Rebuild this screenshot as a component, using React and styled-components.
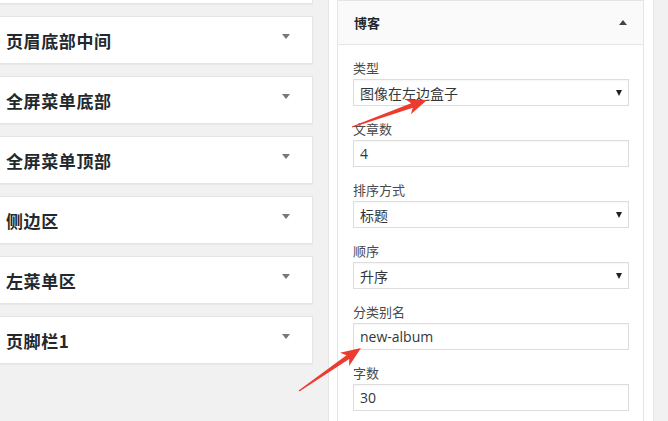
import React from "react";
import styled, { createGlobalStyle } from "styled-components";

const Global = createGlobalStyle`
  html, body { margin: 0; padding: 0; background: #f1f1f1; overflow: hidden; }
  #root { width: 668px; height: 421px; overflow: hidden; }
  * { box-sizing: border-box; }
`;

const Page = styled.div`
  position: relative;
  display: flex;
  align-items: flex-start;
  width: 668px;
  height: 421px;
  overflow: hidden;
  background: #f1f1f1;
  font-family: "Open Sans", "Noto Sans CJK SC", sans-serif;
`;

const SidebarList = styled.div`
  display: flex;
  flex-direction: column;
  gap: 12px;
  width: 313px;
  margin-top: -44px;
  flex-shrink: 0;
`;

const SidebarCard = styled.div`
  height: 48px;
  display: flex;
  align-items: center;
  justify-content: space-between;
  padding: 0 22px 0 6px;
  background: #fff;
  border: 1px solid #e5e5e5;
  border-left: none;
  box-shadow: 0 1px 1px rgba(0, 0, 0, 0.04);
`;

const CardTitle = styled.span`
  font-family: "Noto Sans CJK SC", sans-serif;
  font-weight: 700;
  font-size: 17px;
  letter-spacing: 0.6px;
  color: #23282d;
`;

const Caret = styled.span`
  display: inline-block;
  width: 0;
  height: 0;
  flex-shrink: 0;
  border-left: ${(p) => p.$half}px solid transparent;
  border-right: ${(p) => p.$half}px solid transparent;
  ${(p) =>
    p.$up
      ? `border-bottom: ${p.$h}px solid ${p.$color};`
      : `border-top: ${p.$h}px solid ${p.$color};`}
  margin-bottom: ${(p) => p.$lift || 0}px;
`;

const RightPanel = styled.div`
  margin-left: 15px;
  width: 326px;
  height: 421px;
  flex-shrink: 0;
  background: #fff;
  border-left: 1px solid #e5e5e5;
  border-right: 1px solid #e5e5e5;
  padding: 0 9px 0 8px;
`;

const Widget = styled.div`
  border: 1px solid #e5e5e5;
  border-bottom: none;
  background: #fff;
  height: 100%;
`;

const WidgetHeader = styled.div`
  height: 44px;
  display: flex;
  align-items: center;
  justify-content: space-between;
  padding: 0 16px 0 16px;
  background: #fafafa;
  border-bottom: 1px solid #e5e5e5;
`;

const WidgetTitle = styled.span`
  font-family: "Noto Sans CJK SC", sans-serif;
  font-weight: 700;
  font-size: 13px;
  color: #23282d;
`;

const WidgetBody = styled.div`
  padding: 14px 14px 0 15px;
  display: flex;
  flex-direction: column;
`;

const Field = styled.div`
  display: flex;
  flex-direction: column;
  margin-bottom: 14px;
`;

const Label = styled.label`
  font-family: "Noto Sans CJK SC", sans-serif;
  font-size: 13px;
  line-height: 18px;
  color: #4a4a4a;
  margin-bottom: 2px;
`;

const Control = styled.div`
  height: 27px;
  display: flex;
  align-items: center;
  justify-content: space-between;
  padding: 0 6px 0 6px;
  border: 1px solid #ddd;
  background: #fff;
  box-shadow: inset 0 1px 2px rgba(0, 0, 0, 0.04);
  font-family: ${(p) =>
    p.$latin ? `"Open Sans", sans-serif` : `"Noto Sans CJK SC", sans-serif`};
  font-size: 14px;
  color: #32373c;
`;

const Overlay = styled.svg`
  position: absolute;
  left: 0;
  top: 0;
  pointer-events: none;
`;

const sidebars = ["", "页眉底部中间", "全屏菜单底部", "全屏菜单顶部", "侧边区", "左菜单区", "页脚栏1"];

const fields = [
  { label: "类型", value: "图像在左边盒子", select: true },
  { label: "文章数", value: "4", latin: true },
  { label: "排序方式", value: "标题", select: true },
  { label: "顺序", value: "升序", select: true },
  { label: "分类别名", value: "new-album", latin: true },
  { label: "字数", value: "30", latin: true },
];

function arrowPoints(tail, tip, headLen = 20, headW = 8, shaftW = 2.4, tailW = 0.6) {
  const dx = tip[0] - tail[0];
  const dy = tip[1] - tail[1];
  const len = Math.hypot(dx, dy);
  const u = [dx / len, dy / len];
  const n = [u[1] * -1, u[0]];
  const B = [tip[0] - u[0] * headLen, tip[1] - u[1] * headLen];
  const J = [B[0] + u[0] * 4, B[1] + u[1] * 4];
  const pts = [
    [tail[0] + n[0] * tailW, tail[1] + n[1] * tailW],
    [J[0] + n[0] * shaftW, J[1] + n[1] * shaftW],
    [B[0] + n[0] * headW, B[1] + n[1] * headW],
    tip,
    [B[0] - n[0] * headW, B[1] - n[1] * headW],
    [J[0] - n[0] * shaftW, J[1] - n[1] * shaftW],
    [tail[0] - n[0] * tailW, tail[1] - n[1] * tailW],
  ];
  return pts.map((p) => `${p[0].toFixed(2)},${p[1].toFixed(2)}`).join(" ");
}

export default function App() {
  return (
    <>
      <Global />
      <Page>
        <SidebarList>
          {sidebars.map((s, i) => (
            <SidebarCard key={i}>
              <CardTitle>{s}</CardTitle>
              <Caret $half={4} $h={5} $color="#787878" $lift={8} />
            </SidebarCard>
          ))}
        </SidebarList>
        <RightPanel>
          <Widget>
            <WidgetHeader>
              <WidgetTitle>博客</WidgetTitle>
              <Caret $up $half={4} $h={5} $color="#444" />
            </WidgetHeader>
            <WidgetBody>
              {fields.map((f) => (
                <Field key={f.label}>
                  <Label>{f.label}</Label>
                  <Control $latin={f.latin}>
                    <span>{f.value}</span>
                    {f.select && <Caret $half={3.5} $h={6} $color="#222" />}
                  </Control>
                </Field>
              ))}
            </WidgetBody>
          </Widget>
        </RightPanel>
        <Overlay width="668" height="421" viewBox="0 0 668 421">
          <polygon points={arrowPoints([352, 127], [427, 100])} fill="#ec3b2f" />
          <polygon points={arrowPoints([299, 391], [361, 348])} fill="#ec3b2f" />
        </Overlay>
      </Page>
    </>
  );
}
